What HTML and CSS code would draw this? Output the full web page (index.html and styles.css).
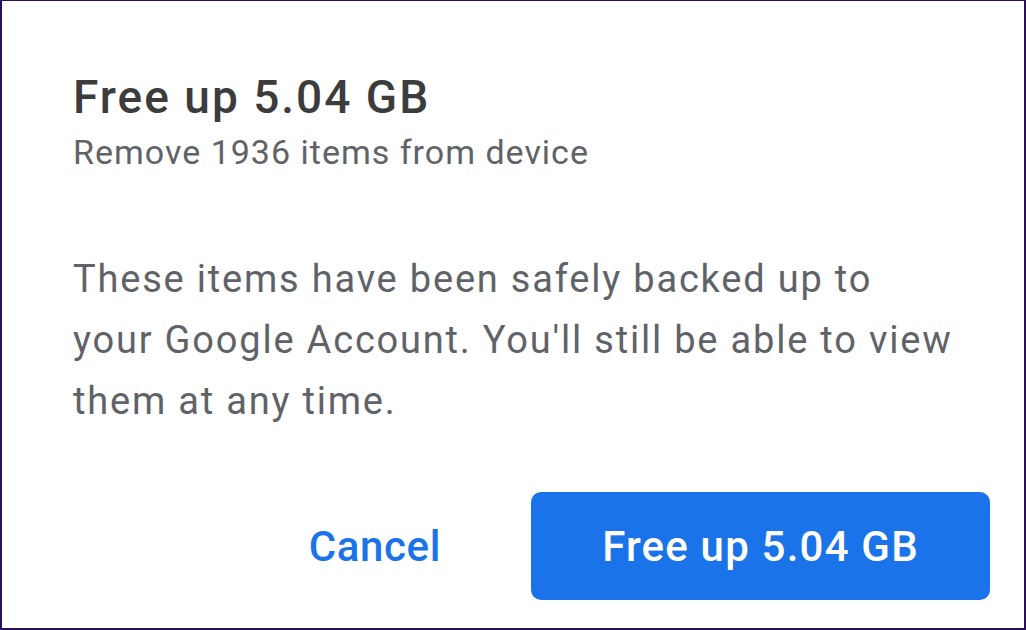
FILE: index.html
```html
<!DOCTYPE html>
<html>
<head>
<meta charset="utf-8">
<link rel="stylesheet" href="styles.css">
</head>
<body>
<div class="dialog">
  <div class="header">
    <h1 class="title">Free up 5.04 GB</h1>
    <p class="subtitle">Remove 1936 items from device</p>
  </div>
  <p class="body-text">These items have been safely backed up to your Google Account. You'll still be able to view them at any time.</p>
  <div class="actions">
    <button class="btn-text">Cancel</button>
    <button class="btn-primary">Free up 5.04 GB</button>
  </div>
</div>
</body>
</html>
```
FILE: styles.css
```css
html, body {
  margin: 0;
  padding: 0;
  background: #ffffff;
}
.dialog {
  box-sizing: border-box;
  width: 1026px;
  height: 630px;
  border: 2px solid #2a1157;
  border-top-width: 1px;
  background: #ffffff;
  font-family: Roboto, "Liberation Sans", sans-serif;
  padding: 70px 34px 0 71px;
  display: flex;
  flex-direction: column;
}
.header {
  display: flex;
  flex-direction: column;
}
.title {
  margin: 0;
  font-size: 46px;
  font-weight: 500;
  letter-spacing: 2px;
  color: #3c3c3c;
  line-height: 52px;
}
.subtitle {
  margin: 9px 0 0 0;
  font-size: 34px;
  font-weight: 400;
  letter-spacing: 1px;
  color: #5f6368;
  line-height: 40px;
}
.body-text {
  margin: 77px 0 0 0;
  font-size: 38px;
  line-height: 61px;
  letter-spacing: 1.8px;
  color: #5f6368;
  max-width: 880px;
}
.actions {
  margin-top: 60px;
  display: flex;
  justify-content: flex-end;
  align-items: center;
  gap: 90px;
}
.btn-text {
  background: none;
  border: none;
  padding: 0;
  font-family: inherit;
  font-size: 42px;
  font-weight: 500;
  letter-spacing: 0.6px;
  color: #1a73e8;
}
.btn-primary {
  width: 459px;
  height: 108px;
  border: none;
  border-radius: 10px;
  background: #1a73e8;
  color: #ffffff;
  font-family: inherit;
  font-size: 42px;
  font-weight: 500;
  letter-spacing: 1.2px;
}
```
